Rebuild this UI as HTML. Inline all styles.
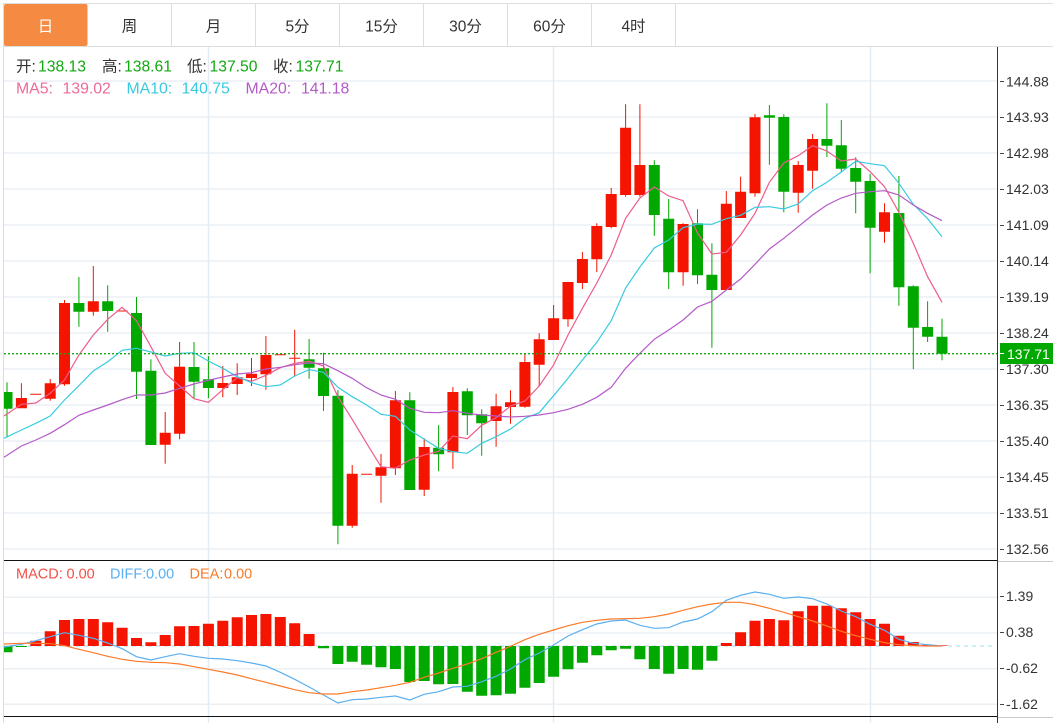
<!DOCTYPE html>
<html lang="zh"><head><meta charset="utf-8"><title>K线图</title>
<style>
html,body{margin:0;padding:0;background:#fff;width:1053px;height:723px;overflow:hidden}
svg{display:block;position:absolute;left:0;top:0}
text{font-family:"Liberation Sans","Noto Sans CJK SC",sans-serif}
</style></head><body>
<svg width="1053" height="723" viewBox="0 0 1053 723" xmlns="http://www.w3.org/2000/svg">
<!-- toolbar -->
<path d="M3 3.5H1053M3 46.5H1053M3.5 3V723M171.5 4V46M255.5 4V46M339.5 4V46M423.5 4V46M507.5 4V46M591.5 4V46M675.5 4V46" stroke="#dddddd" stroke-width="1" fill="none"/>
<rect x="4" y="4" width="83.5" height="42" rx="2" fill="#f58b42"/>
<g font-size="15.5" text-anchor="middle" fill="#333">
<text x="45.5" y="31.5" fill="#fff">日</text><text x="129.5" y="31.5">周</text><text x="213.5" y="31.5">月</text><text x="297.5" y="31.5">5分</text><text x="381.5" y="31.5">15分</text><text x="465.5" y="31.5">30分</text><text x="549.5" y="31.5">60分</text><text x="633.5" y="31.5">4时</text>
</g>
<!-- grid -->
<path d="M4 81H997M4 117H997M4 153H997M4 189H997M4 225H997M4 261H997M4 297H997M4 333H997M4 369H997M4 405H997M4 441H997M4 477H997M4 513H997M4 549H997M4 597.3H997M4 633H997M4 668.7H997M4 704.3H997" stroke="#ebf0f5" stroke-width="1.5" fill="none"/>
<path d="M208.5 47V723M553.5 47V723M870.5 47V723" stroke="#e3ecf3" stroke-width="1.5" fill="none"/>
<!-- candles wicks -->
<path fill="none" stroke="#f51400" stroke-width="1" d="M21.4 383.3V408M50.2 379V400.7M64.5 300V385.7M93.3 266V315.7M165.2 412V463.7M179.6 342V439.3M222.8 366V397.3M237.2 363.3V395M251.5 358V386M265.9 336V389.7M294.7 329.7V376.7M352.2 465V527.7M381 454V502.7M395.4 391V475M424.2 438.3V496M452.9 387V468.7M496.1 393.7V446.7M510.5 390.3V423.7M524.9 354V407.7M539.2 333.3V386.7M553.6 305V340M568 281.7V326.7M582.4 252V289M596.8 223.3V272M611.2 188V228.3M625.6 104.3V196.7M639.9 104.3V196.7M683.1 223.3V285.7M726.3 191V290M740.6 176.7V218M755 114V196.7M798.2 161V212.7M812.6 134V188.7M884.5 203.3V242.7"/>
<path fill="none" stroke="#00a800" stroke-width="1" d="M7 382.3V436.7M78.9 277V326.7M107.7 285.3V331.7M136.5 297V399M150.9 359.3V445M194 342V398.3M208.4 356V398.3M309.1 339V378.7M323.5 352.7V411M337.9 390V544.3M409.8 392.3V490M438.6 425.3V471.3M467.3 388.3V435M481.7 409.3V455.7M654.3 160.3V235.7M668.7 199V289M697.5 209.3V284M711.9 243.3V347.7M769.4 105V164.7M783.8 114.3V212.3M826.9 103.3V157M841.3 120V172M855.7 157.3V213.3M870.1 174V273.3M898.9 176V305.7M913.3 285.3V369.3M927.6 301.3V342M942 318.7V360.3"/>
<!-- candle bodies -->
<path fill="#f51400" d="M15.9 398h11V408.3h-11zM44.7 383.3h11V398.7h-11zM59 303h11V384.3h-11zM87.8 301.3h11V311.7h-11zM159.7 432.7h11V444.7h-11zM174.1 366.7h11V433.7h-11zM217.3 383h11V388h-11zM231.7 377.3h11V384h-11zM246 373.7h11V378h-11zM260.4 355h11V374.3h-11zM346.7 473.7h11V525.7h-11zM375.5 467.3h11V475.7h-11zM389.9 400.3h11V468.3h-11zM418.7 447h11V489.7h-11zM447.4 392h11V452.3h-11zM490.6 406.3h11V421h-11zM505 402.3h11V407h-11zM519.4 362h11V406.7h-11zM533.7 339.3h11V364.7h-11zM548.1 318.3h11V340h-11zM562.5 282h11V319.3h-11zM576.9 259h11V283h-11zM591.3 226h11V259.3h-11zM605.7 194h11V227h-11zM620.1 127.7h11V195h-11zM634.4 165h11V195h-11zM677.6 224h11V272.3h-11zM720.8 203.7h11V290h-11zM735.1 191.7h11V218h-11zM749.5 117.3h11V193.3h-11zM792.7 165h11V192.7h-11zM807.1 139h11V170.7h-11zM879 212.3h11V231.7h-11zM30.3 393.8h11v1h-11zM116.6 310.5h11v1h-11zM274.8 354.2h11v1h-11zM289.2 357.8h11v1h-11zM361.1 473.8h11v1h-11z"/>
<path fill="#00a800" d="M4 392h8.5V408.7H4zM73.4 303h11V311.7h-11zM102.2 301.3h11V311h-11zM131 313h11V371.7h-11zM145.4 370.7h11V445h-11zM188.5 367h11V381.7h-11zM202.9 379.3h11V388h-11zM303.6 359.3h11V367.7h-11zM318 368.3h11V396h-11zM332.4 395.7h11V525.7h-11zM404.3 400.3h11V490h-11zM433.1 447.7h11V454.3h-11zM461.8 391.3h11V415.3h-11zM476.2 414.3h11V423.3h-11zM648.8 165h11V215h-11zM663.2 218.7h11V272.3h-11zM692 223.3h11V275.3h-11zM706.4 274.7h11V290h-11zM763.9 115.3h11V117.7h-11zM778.3 117h11V191.7h-11zM821.4 139h11V145.7h-11zM835.8 145.3h11V168.7h-11zM850.2 168h11V181.7h-11zM864.6 181h11V227.7h-11zM893.4 213h11V287.3h-11zM907.8 286.3h11V327.7h-11zM922.1 327h11V336.7h-11zM936.5 336.7h11V353.7h-11z"/>
<!-- MA lines -->
<polyline fill="none" stroke="#ee5c8c" stroke-width="1.2" points="4,416 21.4,404.3 35.8,403 50.2,393.3 64.5,380 78.9,355 93.3,335 107.7,319.3 122.1,307.3 136.5,320.7 150.9,346.7 165.2,373.3 179.6,386 194,398.7 208.4,402.3 222.8,389.7 237.2,377.7 251.5,381.3 265.9,375.3 280.3,367.7 294.7,363.3 309.1,361.3 323.5,366 337.9,396.7 352.2,419.3 366.6,443.3 381,466.7 395.4,468.3 409.8,460 424.2,455 438.6,451.3 452.9,436 467.3,438.7 481.7,425.3 496.1,417.7 510.5,406 524.9,401 539.2,386 553.6,365 568,335 582.4,308.3 596.8,283 611.2,255 625.6,218.3 639.9,198 654.3,187 668.7,196 683.1,200.7 697.5,233 711.9,254 726.3,252.3 740.6,235 755,213.3 769.4,182.3 783.8,163 798.2,155.7 812.6,145.7 826.9,151 841.3,161 855.7,159 870.1,171.7 884.5,186.7 898.9,212.3 913.3,243.3 927.6,276.7 942,302.3"/>
<polyline fill="none" stroke="#38cbe0" stroke-width="1.2" points="4,438.3 21.4,430 35.8,423.3 50.2,416 64.5,400 78.9,385.7 93.3,371 107.7,361.7 122.1,350.3 136.5,348.3 150.9,352 165.2,356 179.6,353.3 194,352.7 208.4,361 222.8,368.3 237.2,376.7 251.5,382.7 265.9,386.7 280.3,385 294.7,376 309.1,369.7 323.5,372.3 337.9,387.3 352.2,396.7 366.6,405 381,414.3 395.4,416.3 409.8,430 424.2,439.3 438.6,448.3 452.9,451.7 467.3,453.3 481.7,443.3 496.1,436.7 510.5,429 524.9,418.3 539.2,412.7 553.6,395.7 568,378.3 582.4,360 596.8,342.3 611.2,320.7 625.6,288 639.9,267 654.3,248 668.7,240 683.1,227.7 697.5,224 711.9,224.3 726.3,218.7 740.6,215.3 755,207.3 769.4,206.7 783.8,209 798.2,204 812.6,190.7 826.9,182.3 841.3,172 855.7,161.3 870.1,163.7 884.5,165.7 898.9,183.3 913.3,204.3 927.6,218.7 942,236.7"/>
<polyline fill="none" stroke="#b45ac8" stroke-width="1.2" points="4,457.3 21.4,446 35.8,440 50.2,433.3 64.5,424.7 78.9,415.3 93.3,410 107.7,405 122.1,399.7 136.5,395 150.9,395 165.2,393 179.6,388.3 194,384 208.4,380.3 222.8,377 237.2,374 251.5,372.7 265.9,369 280.3,367.3 294.7,364.7 309.1,363 323.5,363.7 337.9,370.7 352.2,378.3 366.6,387.7 381,395 395.4,399.3 409.8,408.3 424.2,412.3 438.6,412.7 452.9,410.7 467.3,413.3 481.7,415 496.1,416 510.5,417 524.9,416.3 539.2,415 553.6,412.7 568,409.3 582.4,404.3 596.8,397.3 611.2,387.3 625.6,368.3 639.9,353.3 654.3,339.3 668.7,330 683.1,320 697.5,307 711.9,301.3 726.3,290 740.6,279 755,264.3 769.4,249 783.8,238.3 798.2,226.7 812.6,215 826.9,205 841.3,198 855.7,193.3 870.1,191.7 884.5,190.7 898.9,195 913.3,205 927.6,213.3 942,220.7"/>
<!-- current price -->
<path d="M4 353.7H997" stroke="#18a818" stroke-width="1.4" stroke-dasharray="2 2" fill="none"/>
<!-- MACD -->
<path d="M4 646H995" stroke="#a6d8ef" stroke-width="1" stroke-dasharray="4 4" fill="none"/>
<path fill="#f51400" d="M30.3 640.7h11V646h-11zM44.7 631.3h11V646h-11zM59 620h11V646h-11zM73.4 619h11V646h-11zM87.8 619h11V646h-11zM102.2 622.3h11V646h-11zM116.6 627.7h11V646h-11zM131 638h11V646h-11zM145.4 642.3h11V646h-11zM159.7 635h11V646h-11zM174.1 626.3h11V646h-11zM188.5 626h11V646h-11zM202.9 623.7h11V646h-11zM217.3 620.7h11V646h-11zM231.7 617.3h11V646h-11zM246 615h11V646h-11zM260.4 614h11V646h-11zM274.8 617h11V646h-11zM289.2 623.3h11V646h-11zM303.6 634h11V646h-11zM720.8 643h11V646h-11zM735.1 632.3h11V646h-11zM749.5 620.7h11V646h-11zM763.9 619h11V646h-11zM778.3 620.3h11V646h-11zM792.7 611.3h11V646h-11zM807.1 605.7h11V646h-11zM821.4 605.7h11V646h-11zM835.8 608.3h11V646h-11zM850.2 612.3h11V646h-11zM864.6 619h11V646h-11zM879 623.7h11V646h-11zM893.4 635.7h11V646h-11zM907.8 642h11V646h-11zM922.1 644.7h11V646h-11zM936.5 645.4h11V646h-11z"/>
<path fill="#00a800" d="M4 646H12.5V652.3H4zM15.9 646h11V647h-11zM318 646h11V648.3h-11zM332.4 646h11V664h-11zM346.7 646h11V661.7h-11zM361.1 646h11V664.7h-11zM375.5 646h11V667.3h-11zM389.9 646h11V669h-11zM404.3 646h11V682h-11zM418.7 646h11V681h-11zM433.1 646h11V684.3h-11zM447.4 646h11V684h-11zM461.8 646h11V691.7h-11zM476.2 646h11V695.7h-11zM490.6 646h11V695.3h-11zM505 646h11V693.7h-11zM519.4 646h11V687.7h-11zM533.7 646h11V683h-11zM548.1 646h11V676.7h-11zM562.5 646h11V669.3h-11zM576.9 646h11V662.7h-11zM591.3 646h11V655.3h-11zM605.7 646h11V650.3h-11zM620.1 646h11V648.7h-11zM634.4 646h11V659.3h-11zM648.8 646h11V669h-11zM663.2 646h11V673.7h-11zM677.6 646h11V669h-11zM692 646h11V669.7h-11zM706.4 646h11V660.7h-11z"/>
<polyline fill="none" stroke="#5ab0f0" stroke-width="1.2" points="4,647 21.4,644.3 35.8,640.7 50.2,636.7 64.5,632.7 78.9,635.3 93.3,638.3 107.7,643 122.1,648.7 136.5,656.7 150.9,660 165.2,656.7 179.6,653.7 194,656.3 208.4,658.3 222.8,659 237.2,660.7 251.5,663 265.9,666 280.3,672.3 294.7,679.3 309.1,687 323.5,695 337.9,703 352.2,699.7 366.6,699 381,697.3 395.4,696 409.8,700 424.2,694.3 438.6,691.7 452.9,687 467.3,686.3 481.7,681.7 496.1,676.3 510.5,669 524.9,659.7 539.2,653 553.6,645 568,636 582.4,629.7 596.8,624 611.2,621 625.6,620 639.9,625.3 654.3,628.3 668.7,627.7 683.1,622 697.5,619 711.9,611.7 726.3,600.3 740.6,595.3 755,592 769.4,594.3 783.8,598.3 798.2,597 812.6,598.7 826.9,604 841.3,611 855.7,616.7 870.1,624.3 884.5,630.3 898.9,639.3 913.3,643.3 927.6,644.7 942,646"/>
<polyline fill="none" stroke="#fb7a2a" stroke-width="1.2" points="4,644 21.4,643.3 35.8,643.3 50.2,643.7 64.5,645.7 78.9,649.3 93.3,652.7 107.7,656.3 122.1,659.3 136.5,661.3 150.9,662.3 165.2,662.7 179.6,664 194,666.7 208.4,669.3 222.8,672 237.2,675 251.5,678.7 265.9,682.3 280.3,686 294.7,689.7 309.1,692.7 323.5,694 337.9,694 352.2,691.7 366.6,690 381,687.7 395.4,685.3 409.8,682.3 424.2,677.3 438.6,673 452.9,668.3 467.3,664 481.7,658.7 496.1,652.3 510.5,646.3 524.9,639.7 539.2,634.3 553.6,630 568,625.7 582.4,622.3 596.8,620.3 611.2,619 625.6,618.7 639.9,618.3 654.3,616.7 668.7,614 683.1,610.3 697.5,606.7 711.9,604 726.3,602.3 740.6,602.3 755,604.7 769.4,608.3 783.8,612.3 798.2,616.7 812.6,621 826.9,626 841.3,631.3 855.7,635.7 870.1,639.3 884.5,642.7 898.9,644.7 913.3,645.7 927.6,646 942,646"/>
<!-- borders and axis -->
<path d="M4 560.5H997M4 716.5H997" stroke="#111" stroke-width="1" fill="none"/>
<path d="M998 561.5H1053M998 717.5H1053" stroke="#cccccc" stroke-width="1" fill="none"/>
<path d="M997.5 47V723" stroke="#333" stroke-width="1" fill="none"/>
<path d="M1000 81.5h4M1000 117.5h4M1000 153.5h4M1000 189.5h4M1000 225.5h4M1000 261.5h4M1000 297.5h4M1000 333.5h4M1000 369.5h4M1000 405.5h4M1000 441.5h4M1000 477.5h4M1000 513.5h4M1000 549.5h4M1000 596.5h4M1000 632.5h4M1000 668.5h4M1000 704.5h4" stroke="#444" stroke-width="1" fill="none"/>
<g font-size="14" fill="#333">
<text x="1006" y="86.5">144.88</text><text x="1006" y="122">143.93</text><text x="1006" y="158">142.98</text><text x="1006" y="194">142.03</text><text x="1006" y="230">141.09</text><text x="1006" y="266">140.14</text><text x="1006" y="302">139.19</text><text x="1006" y="338">138.24</text><text x="1006" y="374">137.30</text><text x="1006" y="410">136.35</text><text x="1006" y="446">135.40</text><text x="1006" y="482">134.45</text><text x="1006" y="518">133.51</text><text x="1006" y="554">132.56</text>
<text x="1006" y="601">1.39</text><text x="1006" y="637">0.38</text><text x="1006" y="673">-0.62</text><text x="1006" y="709">-1.62</text>
</g>
<rect x="1000" y="343" width="53" height="21" fill="#00a800"/>
<path d="M1000 353.5h4" stroke="#fff" stroke-width="1"/>
<text x="1007" y="359" font-size="14" fill="#fff">137.71</text>
<!-- info -->
<g font-size="15.5" fill="#333">
<text x="16" y="71.5">开:</text><text x="102" y="71.5">高:</text><text x="187" y="71.5">低:</text><text x="273" y="71.5">收:</text>
</g>
<g font-size="15.7" fill="#12a812">
<text x="38" y="71.5">138.13</text><text x="124" y="71.5">138.61</text><text x="209.5" y="71.5">137.50</text><text x="295.5" y="71.5">137.71</text>
</g>
<g font-size="15.8">
<text x="16" y="93.5" fill="#ef6a96">MA5:</text><text x="62.5" y="93.5" fill="#ef6a96">139.02</text>
<text x="126.5" y="93.5" fill="#38cbe0">MA10:</text><text x="181.5" y="93.5" fill="#38cbe0">140.75</text>
<text x="245.5" y="93.5" fill="#b45ac8">MA20:</text><text x="301" y="93.5" fill="#b45ac8">141.18</text>
</g>
<g font-size="14.5">
<text x="16" y="578.5" fill="#f0504a">MACD:</text><text x="66.5" y="578.5" fill="#f0504a">0.00</text>
<text x="110" y="578.5" fill="#5ab0f0">DIFF:</text><text x="146" y="578.5" fill="#5ab0f0">0.00</text>
<text x="189.5" y="578.5" fill="#fb7a2a">DEA:</text><text x="224" y="578.5" fill="#fb7a2a">0.00</text>
</g>
</svg>
</body></html>
